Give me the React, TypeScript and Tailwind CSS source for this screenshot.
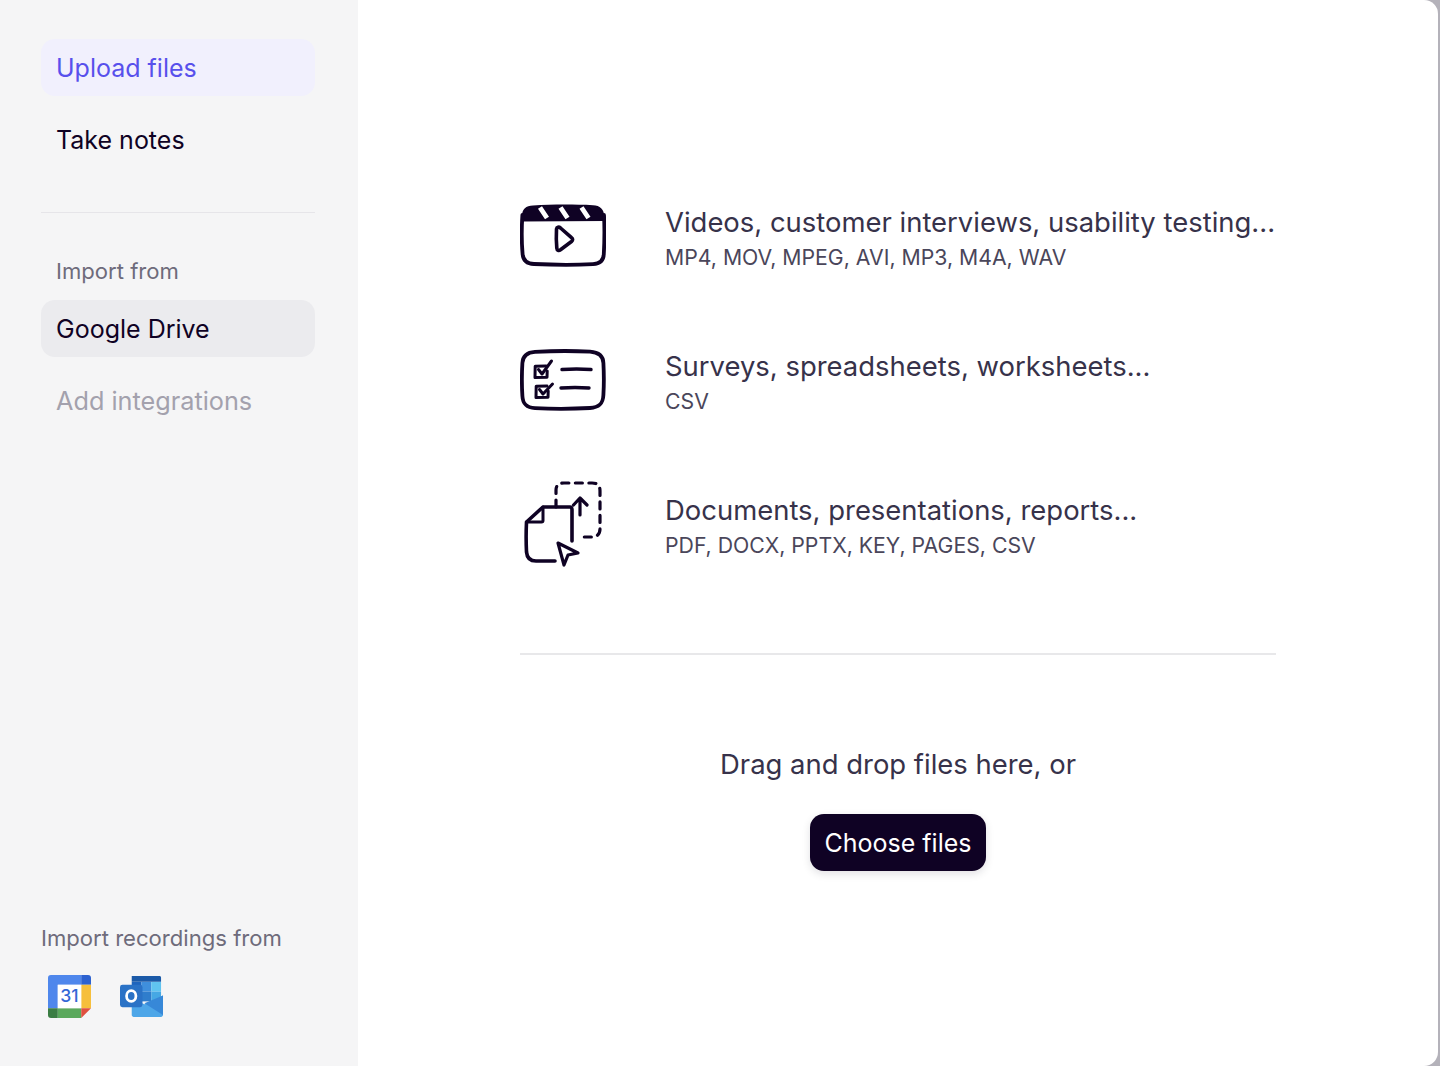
import React from "react";

const ink = "#0f0224";

function VideoIcon() {
  return (
    <svg width="86" height="64" viewBox="0 0 86 64" fill="none" className="shrink-0">
      <path d="M2 13C2 6 6 2.500 13 2.400C32 1.400 54 1.400 73 2.200C80 2.600 84 6 84.200 13L84.400 18L2 18.500Z" fill={ink} />
      <path d="M2.400 12C1.600 24 1.600 40 2.600 51C3.200 58 7 60.800 14 61C34 62 56 62 73 61.200C80 60.800 83.600 58 83.800 51C84.400 40 84.600 24 84 12" stroke={ink} strokeWidth="3.800" strokeLinecap="round" />
      <path d="M20 4.500L27 15M40.500 4.500L47.500 15M61.500 4.500L68.500 15" stroke="#ffffff" strokeWidth="4.800" />
      <path d="M36.500 26C36.200 32 36.200 39 36.800 45C37 47.500 38.800 48 40.500 46.800L51.500 38.500C53 37.300 53 35.800 51.500 34.600L40.500 25C38.800 23.600 36.800 24 36.500 26Z" stroke={ink} strokeWidth="3.600" strokeLinejoin="round" />
    </svg>
  );
}

function ListIcon() {
  return (
    <svg width="86" height="64" viewBox="0 0 86 64" fill="none" className="shrink-0">
      <path d="M15 4.800C34 3.800 54 3.800 70 4.600C79 5.200 83.200 9 83.400 16C84 27 84 38 83.400 48C83 57 79 60.600 70 61C52 62 33 62 15 61.200C6.500 60.700 2.800 57 2.400 49C1.700 38 1.700 27 2.400 16C2.800 9 6.500 5.300 15 4.800Z" stroke={ink} strokeWidth="3.800" />
      <path d="M26 19L15.200 19.200L15 30.500L27 30.200L27.200 24" stroke={ink} strokeWidth="3" strokeLinecap="round" strokeLinejoin="round" />
      <path d="M18.500 22.500L22 27L31.500 14" stroke={ink} strokeWidth="3" strokeLinecap="round" strokeLinejoin="round" />
      <path d="M27 39L16.200 39.200L16 50.500L28 50.200L28.200 44" stroke={ink} strokeWidth="3" strokeLinecap="round" strokeLinejoin="round" />
      <path d="M19.500 42.500L23 47L32.500 37" stroke={ink} strokeWidth="3" strokeLinecap="round" strokeLinejoin="round" />
      <path d="M42 22.500C51 21.800 62 21.800 71 22.500M41 41C50 40.400 60 40.400 69 41" stroke={ink} strokeWidth="3.400" strokeLinecap="round" />
    </svg>
  );
}

function FilesIcon() {
  return (
    <svg width="86" height="90" viewBox="0 0 86 90" fill="none" className="shrink-0">
      <path d="M36 29V12C36 7 39 5 44 5H72C78 5 80 8 80 13V51C80 56 77 59 72 59H60" stroke={ink} strokeWidth="3.200" strokeDasharray="7 6.500" strokeLinecap="round" />
      <path d="M60 37V21M53.500 27L60 20L67 27" stroke={ink} strokeWidth="3.200" strokeLinecap="round" strokeLinejoin="round" />
      <path d="M35 83H16C10 83 7 80 6.500 74C6 64 6 54 6.500 44L23 29H50C51.500 29 52 30 52 32V63" stroke={ink} strokeWidth="3.600" strokeLinecap="round" strokeLinejoin="round" />
      <path d="M6.500 44H21.500C22.500 44 23 43.500 23 42.500V29" stroke={ink} strokeWidth="3" strokeLinecap="round" strokeLinejoin="round" />
      <path d="M38 65L58 75L48 77L44 87Z" fill="#ffffff" stroke={ink} strokeWidth="3.200" strokeLinejoin="round" />
    </svg>
  );
}

function CalendarIcon() {
  return (
    <svg width="43" height="43" viewBox="0 0 44 44">
      <path d="M3 0H34V10H10V34H0V3C0 1 1 0 3 0Z" fill="#4f87ec" />
      <path d="M34 0H41C43 0 44 1 44 3V10H34Z" fill="#2d62d0" />
      <rect x="34" y="10" width="10" height="24" fill="#f6bf3c" />
      <rect x="10" y="34" width="24" height="10" fill="#5aa85c" />
      <path d="M0 34H10V44H3C1 44 0 43 0 41Z" fill="#3a7d43" />
      <path d="M34 34H44L34 44Z" fill="#e0503f" />
      <rect x="10" y="10" width="24" height="24" fill="#ffffff" />
      <text x="22" y="28" textAnchor="middle" fontFamily="Inter, sans-serif" fontSize="18" fontWeight="500" fill="#3367d6">31</text>
    </svg>
  );
}

function OutlookIcon() {
  return (
    <svg width="43" height="43" viewBox="0 0 44 44">
      <rect x="12" y="7" width="10" height="10" fill="#1f65bd" />
      <rect x="22" y="7" width="10" height="10" fill="#3f8fdc" />
      <rect x="32" y="7" width="10" height="10" fill="#60c4f0" />
      <rect x="12" y="17" width="10" height="10" fill="#2b78c8" />
      <rect x="22" y="17" width="10" height="10" fill="#2f7dcc" />
      <rect x="32" y="17" width="10" height="10" fill="#46a8e4" />
      <path d="M12 1H40C41.500 1 42 1.500 42 3V7H12Z" fill="#1b5aa8" />
      <path d="M12 24L25 30L44 21V41C44 42 43 43 42 43H14C13 43 12 42 12 41Z" fill="#4da6e8" />
      <path d="M44 21V41L25 29Z" fill="#3788d8" />
      <rect x="0" y="10" width="23" height="23" rx="2.500" fill="#2a72c6" />
      <ellipse cx="11.500" cy="21.500" rx="4.800" ry="5.400" fill="none" stroke="#ffffff" strokeWidth="2.800" />
    </svg>
  );
}

function FileRow({ icon, title, sub }: { icon: React.ReactNode; title: string; sub: string }) {
  return (
    <div className="flex h-[90px] items-center">
      <div className="flex w-[145px] shrink-0 justify-start">{icon}</div>
      <div className="flex flex-col pt-[5px]">
        <div className="text-[27.450px] leading-[36px] text-[#37324a]">{title}</div>
        <div className="mt-[2px] text-[21.250px] leading-[30px] text-[#4a465a]">{sub}</div>
      </div>
    </div>
  );
}

export default function App() {
  return (
    <div className="flex h-[1066px] w-[1440px] overflow-hidden bg-[#b4b2ba] font-['Inter',sans-serif]">
      <aside className="flex h-full w-[358px] shrink-0 flex-col bg-[#f5f5f6] pt-[39px] pr-[43px] pl-[41px]">
        <div className="flex h-[57px] items-center rounded-[14px] bg-[#f1f0fd] px-[15px] pt-[2px] text-[25px] text-[#5850ec]">Upload files</div>
        <div className="mt-[15px] flex h-[57px] items-center px-[15px] pt-[2px] text-[25px] text-[#0f0224]">Take notes</div>
        <div className="mt-[44px] h-px bg-[#e6e5e9]" />
        <div className="mt-[45px] px-[15px] text-[22.100px] leading-[26px] text-[#6e6b7b]">Import from</div>
        <div className="mt-[16px] flex h-[57px] items-center rounded-[14px] bg-[#ebebee] px-[15px] pt-[2px] text-[25px] text-[#0f0224]">Google Drive</div>
        <div className="mt-[15px] flex h-[57px] items-center px-[15px] pt-[2px] text-[25.250px] text-[#a3a1ad]">Add integrations</div>
        <div className="mt-auto pb-[48px]">
          <div className="text-[22.100px] leading-[26px] text-[#6e6b7b]">Import recordings from</div>
          <div className="mt-[24px] flex gap-[29px] pl-[7px]">
            <CalendarIcon />
            <OutlookIcon />
          </div>
        </div>
      </aside>
      <main className="mr-[2px] flex h-full min-w-0 flex-1 flex-col rounded-r-[14px] bg-white pt-[190px] pr-[162px] pl-[162px]">
        <div className="flex flex-col gap-[54px]">
          <FileRow icon={<VideoIcon />} title="Videos, customer interviews, usability testing..." sub="MP4, MOV, MPEG, AVI, MP3, M4A, WAV" />
          <FileRow icon={<ListIcon />} title="Surveys, spreadsheets, worksheets..." sub="CSV" />
          <FileRow icon={<FilesIcon />} title="Documents, presentations, reports..." sub="PDF, DOCX, PPTX, KEY, PAGES, CSV" />
        </div>
        <div className="mt-[85px] h-[2px] bg-[#e8e8ea]" />
        <div className="mt-[91px] text-center text-[27.450px] leading-[36px] text-[#37324a]">Drag and drop files here, or</div>
        <div className="mt-[32px] flex justify-center">
          <button className="flex h-[57px] items-center rounded-[14px] bg-[#0f0224] px-[15px] pt-[2px] text-[25px] text-white shadow-[0_3px_8px_rgba(15,2,36,0.12)]">Choose files</button>
        </div>
      </main>
    </div>
  );
}
